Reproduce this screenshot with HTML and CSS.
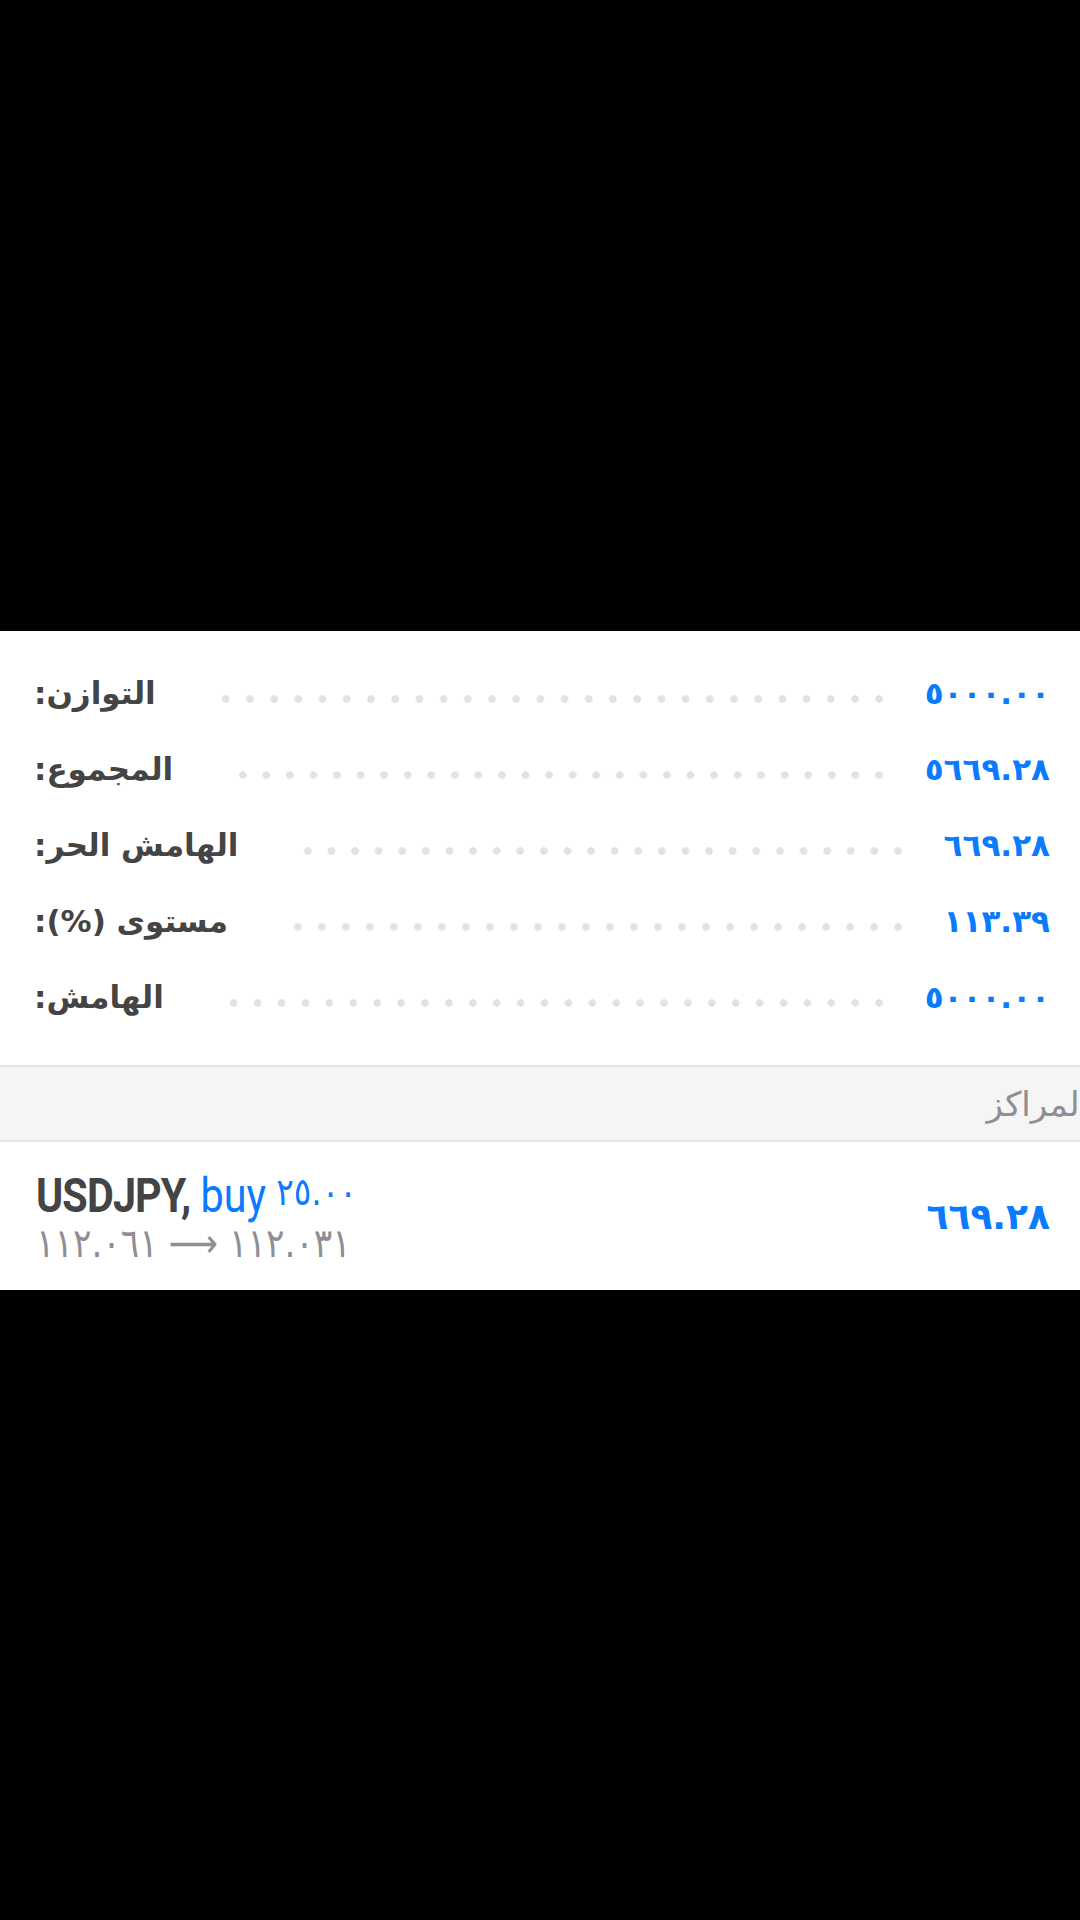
FILE: index.html
```html
<!DOCTYPE html>
<html>
<head>
  <meta charset="UTF-8">
  <meta name="viewport" content="width=device-width, initial-scale=1.0">
  <title>الحساب</title>
  <link rel="stylesheet" href="styles.css">
</head>
<body>
  <div class="screen-top"></div>

  <div class="panel">
    <div class="summary">
      <div class="row">
        <span class="label" dir="rtl">التوازن:</span>
        <span class="dots"></span>
        <span class="value">٥٠٠٠.٠٠</span>
      </div>
      <div class="row">
        <span class="label" dir="rtl">المجموع:</span>
        <span class="dots"></span>
        <span class="value">٥٦٦٩.٢٨</span>
      </div>
      <div class="row">
        <span class="label" dir="rtl">الهامش الحر:</span>
        <span class="dots"></span>
        <span class="value">٦٦٩.٢٨</span>
      </div>
      <div class="row">
        <span class="label" dir="rtl">مستوى (%):</span>
        <span class="dots"></span>
        <span class="value">١١٣.٣٩</span>
      </div>
      <div class="row">
        <span class="label" dir="rtl">الهامش:</span>
        <span class="dots"></span>
        <span class="value">٥٠٠٠.٠٠</span>
      </div>
    </div>

    <div class="section-head"><span dir="rtl">المراكز</span></div>

    <div class="position">
      <div class="pos-info">
        <div class="pos-title">
          <span class="symbol">USDJPY,</span>
          <span class="side">buy <bdi class="lots">٢٥.٠٠</bdi></span>
        </div>
        <div class="pos-prices"><bdi>١١٢.٠٦١</bdi> <span class="arrow">⟶</span> <bdi>١١٢.٠٣١</bdi></div>
      </div>
      <div class="pos-profit">٦٦٩.٢٨</div>
    </div>
  </div>
</body>
</html>
```

FILE: styles.css
```css
body {
  margin: 0;
  background: #000;
  font-family: "DejaVu Sans", sans-serif;
}
.screen-top {
  height: 631px;
}
.panel {
  background: #fff;
  overflow: hidden;
}
.summary {
  padding: 24px 30px 30px 34px;
}
.row {
  display: flex;
  align-items: center;
  height: 76px;
}
.label {
  font-weight: bold;
  font-size: 31px;
  color: #444;
}
.dots {
  flex: 1;
  align-self: stretch;
  margin: 0 34px 0 58px;
  background-image: radial-gradient(circle, #e2e2e2 3.5px, transparent 4px);
  background-size: 23.5px 8px;
  background-repeat: space no-repeat;
  background-position: 0 40px;
}
.value {
  font-weight: bold;
  font-size: 31px;
  letter-spacing: -0.5px;
  color: #0a7aff;
}
.section-head {
  display: flex;
  align-items: center;
  justify-content: flex-end;
  height: 73px;
  background: #f5f5f5;
  border-top: 2px solid #e4e4e4;
  border-bottom: 2px solid #e4e4e4;
  font-size: 34px;
  color: #8e8e93;
}
.section-head span {
  margin-right: -9px;
}
.position {
  display: flex;
  align-items: center;
  justify-content: space-between;
  height: 148px;
  padding: 0 30px 0 36px;
}
.pos-title {
  font-family: Roboto, sans-serif;
  font-size: 48px;
  line-height: 50px;
  white-space: nowrap;
  transform: scaleX(0.86);
  transform-origin: left center;
}
.symbol {
  font-weight: bold;
  color: #444;
  letter-spacing: -1px;
}
.side {
  color: #0a7aff;
}
.lots {
  font-family: "DejaVu Sans", sans-serif;
  font-size: 38px;
  vertical-align: 7px;
}
.pos-prices {
  font-size: 40px;
  line-height: 44px;
  color: #8e8e93;
  white-space: nowrap;
  transform: scaleX(0.86);
  transform-origin: left center;
}
.arrow {
  font-size: 40px;
}
.pos-profit {
  font-weight: bold;
  font-size: 36px;
  letter-spacing: -0.5px;
  color: #0a7aff;
}
```
